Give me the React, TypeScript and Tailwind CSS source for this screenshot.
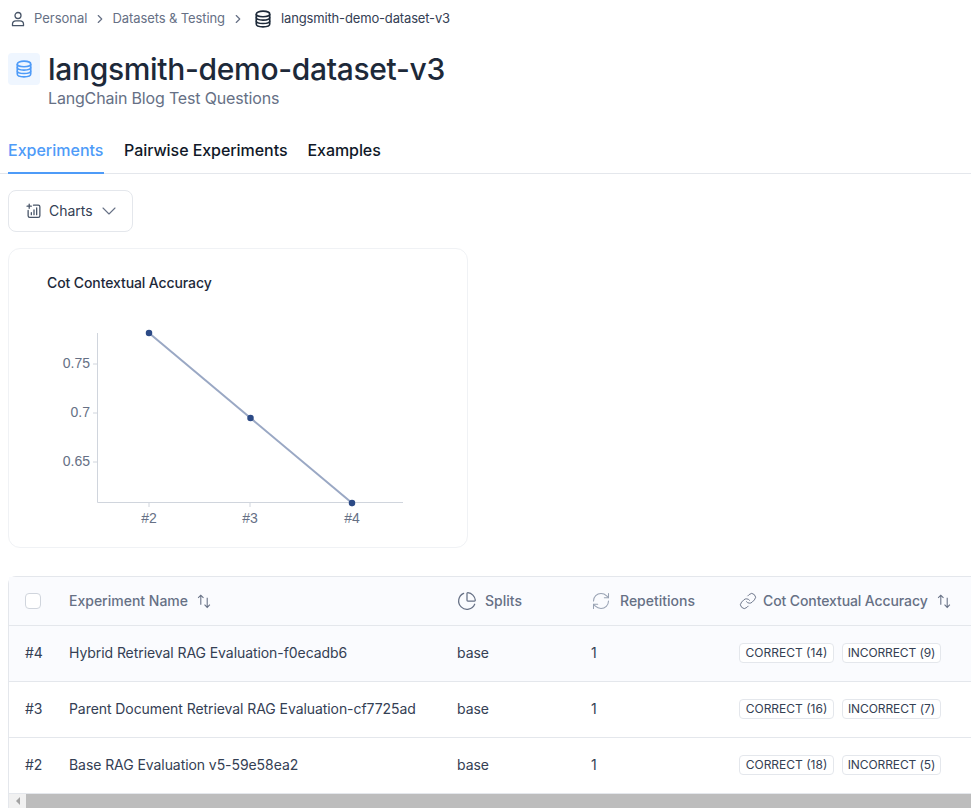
import React from "react";
import { ChevronRight, ChevronDown, Link, RefreshCw, PieChart } from "lucide-react";

const rows = [
  { id: "#4", name: "Hybrid Retrieval RAG Evaluation-f0ecadb6", c: 14, i: 9, bg: "bg-[#fafbfe]" },
  { id: "#3", name: "Parent Document Retrieval RAG Evaluation-cf7725ad", c: 16, i: 7, bg: "bg-white" },
  { id: "#2", name: "Base RAG Evaluation v5-59e58ea2", c: 18, i: 5, bg: "bg-white" },
];

function SortIcon() {
  return (
    <svg width="16" height="16" viewBox="0 0 15 15" fill="none" stroke="#667085" strokeWidth="1" className="shrink-0">
      <path d="M4.5 11V2M2 4.5L4.5 2L7 4.5" />
      <path d="M10.5 4.5V13.5M8 11L10.5 13.5L13 11" />
    </svg>
  );
}

function Db({ size, className, strokeWidth }: { size: number; className: string; strokeWidth: number }) {
  return (
    <svg width={size} height={size} viewBox="0 0 16 16" fill="none" stroke="currentColor" strokeWidth={strokeWidth} className={className}>
      <ellipse cx="8" cy="3.5" rx="6" ry="2.5" />
      <path d="M2 3.5V12.5C2 13.9 4.7 15 8 15S14 13.9 14 12.5V3.5" />
      <path d="M2 6.5C2 7.9 4.7 9 8 9S14 7.9 14 6.5M2 9.5C2 10.9 4.7 12 8 12S14 10.9 14 9.5" />
    </svg>
  );
}

function Chart() {
  const axis = "#d0d5dd";
  const label = "#667085";
  return (
    <svg width="460" height="230" viewBox="9 319 460 230" className="block" fontFamily="'Liberation Sans', Arial, sans-serif" fontSize="14">
      <path d="M97.5 333V502.5H403" fill="none" stroke={axis} strokeWidth="1" />
      <path d="M93 364H97M93 413H97M93 462H97M149 503V507M250 503V507M352 503V507" stroke={axis} strokeWidth="1" />
      <text x="90" y="368" textAnchor="end" fill={label}>0.75</text>
      <text x="90" y="417" textAnchor="end" fill={label}>0.7</text>
      <text x="90" y="466" textAnchor="end" fill={label}>0.65</text>
      <text x="149" y="523" textAnchor="middle" fill={label}>#2</text>
      <text x="250" y="523" textAnchor="middle" fill={label}>#3</text>
      <text x="352" y="523" textAnchor="middle" fill={label}>#4</text>
      <path d="M149 333L250.5 418L352 503" fill="none" stroke="#9aa8c4" strokeWidth="2" />
      <circle cx="149" cy="333" r="3.25" fill="#2c4a86" />
      <circle cx="250.5" cy="418" r="3.25" fill="#2c4a86" />
      <circle cx="352" cy="503" r="3.25" fill="#2c4a86" />
    </svg>
  );
}

export default function App() {
  return (
    <div className="h-[808px] w-[971px] overflow-hidden bg-white font-['Inter','Noto_Sans',sans-serif] text-[#1d2939]">
      <div className="flex h-[37px] items-center pl-[10px] text-[13px] text-[#667085]">
        <svg width="16" height="16" viewBox="0 0 16 16" fill="none" stroke="#475467" strokeWidth="1.3">
          <circle cx="8" cy="4.5" r="3" />
          <path d="M2.5 14.7V13C2.5 11 4 9.8 6 9.8H10C12 9.8 13.5 11 13.5 13V14.7Z" strokeLinejoin="round" />
        </svg>
        <span className="ml-[8px]">Personal</span>
        <ChevronRight size={14} className="ml-[5px] mr-[6px] text-[#667085]" />
        <span className="tracking-[-0.1px]">Datasets &amp; Testing</span>
        <ChevronRight size={14} className="ml-[6px] mr-[9px] text-[#667085]" />
        <Db size={18} strokeWidth={1.4} className="text-[#1d2939]" />
        <span className="ml-[9px] tracking-[-0.15px] text-[#344054]">langsmith-demo-dataset-v3</span>
      </div>

      <div className="mt-[16px] flex items-start gap-[8px] pl-[8px]">
        <div className="flex h-8 w-8 items-center justify-center rounded-[4px] bg-[#eff6ff]">
          <Db size={18} strokeWidth={1.4} className="text-[#4e9bf8]" />
        </div>
        <div>
          <div className="text-[30px] font-medium leading-[32px] tracking-[-0.32px] text-[#1d2939]">langsmith-demo-dataset-v3</div>
          <div className="mt-[3px] text-[16px] leading-[20px] tracking-[-0.17px] text-[#667085]">LangChain Blog Test Questions</div>
        </div>
      </div>

      <div className="mt-[19px] flex h-[47px] gap-[20px] border-b border-[#e4e7ec] pl-[8px] text-[16px] font-medium text-[#101828]">
        <div className="flex h-[47px] w-[96px] items-center border-b-2 border-[#4e9bf8] text-[#4e9bf8]">Experiments</div>
        <div className="flex h-[45px] items-center tracking-[-0.06px]">Pairwise Experiments</div>
        <div className="flex h-[45px] items-center tracking-[-0.06px]">Examples</div>
      </div>

      <div className="ml-[8px] mt-[16px] flex h-[42px] w-[125px] items-center rounded-[8px] border border-[#e4e7ec] pb-[2px] pl-[17px] text-[14px] text-[#344054]">
        <svg width="16" height="16" viewBox="0 0 15 15" fill="none" stroke="#475467" strokeWidth="1.2" strokeLinecap="round" className="mt-[2px]">
          <path d="M7 2H11.5A1.5 1.5 0 0 1 13 3.5V12A1.5 1.5 0 0 1 11.5 13.5H3.5A1.5 1.5 0 0 1 2 12V7" />
          <path d="M3 1V5M1 3H5M5 11V9M7.5 11V6.5M10 11V4.5" />
        </svg>
        <span className="ml-[7px]">Charts</span>
        <ChevronDown size={24} strokeWidth={1.1} className="ml-[4px] mt-[2px] text-[#667085]" />
      </div>

      <div className="ml-[8px] mt-[16px] h-[300px] w-[460px] rounded-[12px] border border-[#f0f2f5]">
        <div className="ml-[38px] mt-[24px] h-[20px] text-[14px] font-medium leading-[20px] tracking-[-0.1px] text-[#1d2939]">Cot Contextual Accuracy</div>
        <div className="mt-[26px]"><Chart /></div>
      </div>

      <div className="ml-[8px] mt-[28px] w-[975px] rounded-t-[8px] border-x border-t border-[#e4e7ec]">
        <div className="flex h-[49px] items-center border-b border-[#e4e7ec] bg-[#fafbfe] text-[14px] font-medium text-[#667085]">
          <div className="flex w-[60px] pl-[16px]">
            <span className="h-4 w-4 rounded-[4px] border border-[#d0d5dd] bg-white" />
          </div>
          <div className="flex w-[388px] items-center gap-[8px]"><span className="-mt-[1px]">Experiment Name</span><SortIcon /></div>
          <div className="flex w-[134px] items-center gap-[8px]"><PieChart size={20} strokeWidth={1.5} /><span className="-mt-[1px]">Splits</span></div>
          <div className="flex w-[148px] items-center gap-[9px]"><RefreshCw size={20} strokeWidth={1.25} className="text-[#98a2b3]" /><span className="-mt-[1px]">Repetitions</span></div>
          <div className="flex items-center gap-[6px]"><Link size={18} strokeWidth={1.25} /><span className="-mt-[1px] mr-[2px] tracking-[-0.1px]">Cot Contextual Accuracy</span><SortIcon /></div>
        </div>
        {rows.map((r) => (
          <div key={r.id} className={`flex h-[56px] items-center border-b border-[#e4e7ec] pb-[2px] text-[14px] tracking-[-0.07px] text-[#344054] ${r.bg}`}>
            <div className="w-[60px] pl-[16px]">{r.id}</div>
            <div className="w-[388px]">{r.name}</div>
            <div className="w-[134px]">base</div>
            <div className="w-[148px]">1</div>
            <div className="flex gap-[8px] text-[12px] leading-none">
              <span className="flex h-5 w-[95px] items-center justify-center rounded-[4px] border border-[#e4e7ec] bg-white tracking-normal">CORRECT ({r.c})</span>
              <span className="flex h-5 w-[99px] items-center justify-center rounded-[4px] border border-[#e4e7ec] bg-white tracking-[-0.1px]">INCORRECT ({r.i})</span>
            </div>
          </div>
        ))}
        <div className="flex h-[14px] items-stretch bg-[#f1f1f1]">
          <div className="flex w-[17px] items-center justify-center">
            <span className="h-0 w-0 border-y-[4px] border-r-[4px] border-y-transparent border-r-[#a3a3a3]" />
          </div>
          <div className="flex-1 bg-[#bdbdbd]" />
        </div>
      </div>
    </div>
  );
}
